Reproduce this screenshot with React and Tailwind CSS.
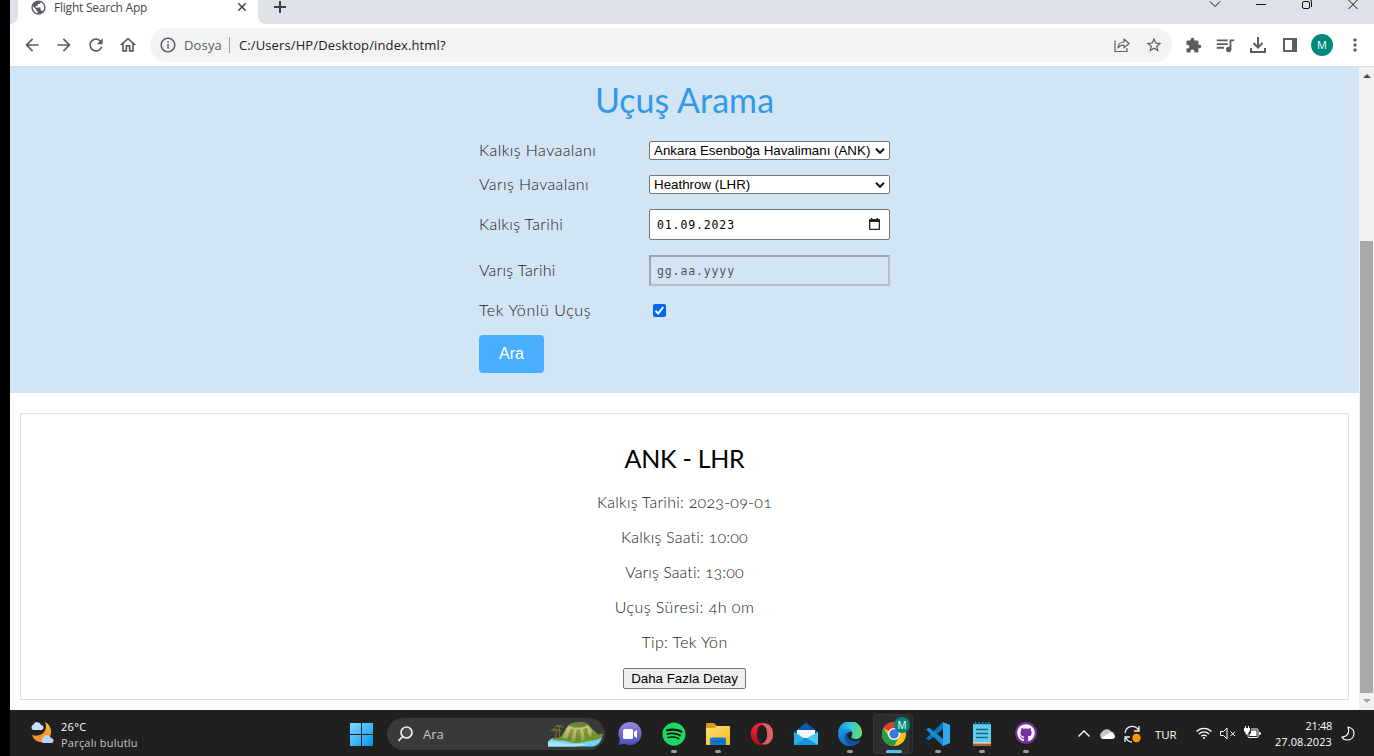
import React from "react";
import {
  MdArrowBack, MdArrowForward, MdRefresh, MdOutlineHome, MdInfoOutline, MdStarBorder,
  MdExtension, MdQueueMusic, MdMoreVert, MdPublic,
} from "react-icons/md";
import { FaGithub, FaSpotify } from "react-icons/fa";

function TabStrip() {
  return (
    <div className="flex h-6 shrink-0 bg-white">
      <div className="w-2 rounded-br-lg bg-[#dee1e8]" />
      <div className="flex h-4 w-60 items-center pl-3">
        <MdPublic className="-mt-[2px] size-[17px] shrink-0 text-[#5a5e63]" />
        <span className="ml-[7px] -mt-px flex-1 text-[12px] leading-4 tracking-[-0.22px] text-[#45484c]">Flight Search App</span>
        <svg className="-mt-[2px] mr-3 size-2" viewBox="0 0 8 8" stroke="#3c4043" strokeWidth="1.5"><path d="M.3.3l7.4 7.4M7.7.3L.3 7.7" /></svg>
      </div>
      <div className="flex flex-1 items-start rounded-bl-lg bg-[#dee1e8]">
        <svg className="ml-4 mt-[1px] size-3" viewBox="0 0 12 12" stroke="#3c4043" strokeWidth="2"><path d="M6 0v12M0 6h12" /></svg>
        <div className="flex-1" />
        <svg className="h-6 w-[174px]" viewBox="0 0 174 24" fill="none" stroke="#111" strokeWidth="1">
          <path d="M10 1.5l5 5 5-5M56 4.500h10" />
          <rect x="102.500" y="1.500" width="7" height="7" rx="1.500" />
          <path d="M104.500-.5h5a2 2 0 0 1 2 2V7M148.500 0l9 9M157.500 0l-9 9" />
        </svg>
      </div>
    </div>
  );
}

function Toolbar() {
  return (
    <div className="flex h-[43px] shrink-0 items-center border-b border-[#dadce0] bg-white pl-3 text-[#5a5e63]">
      <div className="flex w-32 gap-3">
        <MdArrowBack className="size-5" />
        <MdArrowForward className="size-5" />
        <MdRefresh className="size-5" />
        <MdOutlineHome className="size-5" />
      </div>
      <div className="flex h-[34px] w-[1022px] items-center rounded-full bg-[#f1f3f4] pl-[9px] pr-[9px]">
        <MdInfoOutline className="size-[18px]" />
        <span className="ml-[7px] pt-px text-[13px] tracking-[0.15px]">Dosya</span>
        <span className="ml-[7px] h-4 w-px bg-[#9aa0a6]" />
        <span className="ml-[9px] flex-1 pt-px text-[13px] tracking-[0.12px] text-[#202124]">C:/Users/HP/Desktop/index.html?</span>
        <svg className="mr-[15px] h-4 w-4" viewBox="0 0 16 16" fill="none" stroke="#5f6368" strokeWidth="1.2">
          <path d="M1 3.500v11h12V11" /><path d="M4 11c.3-4 2.500-6 6-6V2l5 4.500-5 4.300V8C7.300 8 5.400 9 4 11z" strokeLinejoin="round" />
        </svg>
        <MdStarBorder className="size-[18px]" />
      </div>
      <div className="ml-[13px] flex items-center">
        <MdExtension className="size-[17px]" />
        <MdQueueMusic className="ml-3 size-[22px]" />
        <svg className="ml-[13px] size-[18px]" viewBox="0 0 18 18" fill="none" stroke="currentColor" strokeWidth="2"><path d="M9 1v10M4.500 7L9 11.500 13.500 7M2 12v4h14v-4" /></svg>
        <svg className="ml-4 h-[14px] w-[14px]" viewBox="0 0 14 14"><path fill="currentColor" fillRule="evenodd" d="M0 0h14v14H0zM2 2v10h7V2z" /></svg>
        <span className="ml-[14px] flex size-[22px] items-center justify-center rounded-full bg-[#00897b] text-[11px] text-white">M</span>
        <MdMoreVert className="ml-3 size-5" />
      </div>
    </div>
  );
}

function Select({ children }) {
  return (
    <div className="flex h-[19px] items-center rounded-[2px] border border-[#767676] bg-white pl-1 pr-1 font-['Liberation_Sans',sans-serif] text-[13.333px] leading-[17px] text-black">
      <span className="flex-1 whitespace-nowrap">{children}</span>
      <svg className="h-[6px] w-[10px]" viewBox="0 0 10 6" fill="none" stroke="#111" strokeWidth="2"><path d="M1 .8l4 4 4-4" /></svg>
    </div>
  );
}

function SearchForm() {
  return (
    <section className="flex h-[326px] flex-col items-center bg-[#d2e5f5] font-['Lato',sans-serif]">
      <h1 className="mt-[13px] h-[61px] whitespace-nowrap text-[34px] leading-10 tracking-[0.05px] text-[#3498ea]">Uçuş Arama</h1>
      <div className="grid w-[411px] grid-cols-[170px_241px] grid-rows-[19px_19px_31px_31px_19px_38px] items-center gap-y-[15px] text-[16px] font-light text-[#222]">
        <span className="pb-[2px] tracking-[0.45px]">Kalkış Havaalanı</span>
        <Select>Ankara Esenboğa Havalimanı (ANK)</Select>
        <span className="pb-[2px] tracking-[0.41px]">Varış Havaalanı</span>
        <Select>Heathrow (LHR)</Select>
        <span className="pb-[2px] tracking-[0.33px]">Kalkış Tarihi</span>
        <div className="flex h-[31px] items-center justify-between rounded-[2px] border border-[#767676] bg-white pl-[7px] pr-[9px] font-['DejaVu_Sans_Mono',monospace] text-[11.5px] font-normal tracking-[0.87px] text-black">
          <span className="pt-[2px]">01.09.2023</span>
          <svg className="-mt-[2px] h-3 w-[11px]" viewBox="0 0 11 12"><path fill="#222" fillRule="evenodd" d="M1 1h1V0h1.300v1h4.400V0H9v1h1q1 0 1 1v9q0 1-1 1H1q-1 0-1-1V2q0-1 1-1zM1.300 4v6.700h8.400V4z" /></svg>
        </div>
        <span className="pb-[2px] tracking-[0.25px]">Varış Tarihi</span>
        <div className="flex h-[31px] items-center border-2 border-b-[#b3c1ce] border-l-[#9ba8b4] border-r-[#b3c1ce] border-t-[#9ba8b4] pl-[6px] pt-[2px] font-['DejaVu_Sans_Mono',monospace] text-[11.5px] font-normal tracking-[0.87px] text-[#545454]">gg.aa.yyyy</div>
        <span className="pb-[2px] tracking-[0.6px]">Tek Yönlü Uçuş</span>
        <span className="ml-1 flex size-[13px] items-center justify-center rounded-[2px] bg-[#0067f5]">
          <svg className="size-[11px]" viewBox="0 0 11 11" fill="none" stroke="#fff" strokeWidth="2"><path d="M1.500 5.800l2.700 2.700 5-6.500" /></svg>
        </span>
        <button className="h-[38px] w-[65px] rounded bg-[#49aeff] font-['Liberation_Sans',sans-serif] text-[16px] font-normal text-white">Ara</button>
      </div>
    </section>
  );
}

function FlightCard() {
  return (
    <section className="mx-[10px] mt-5 flex h-[287px] flex-col items-center border border-[#d2e3f3] font-['Lato',sans-serif] text-[16px] font-light leading-[19px] text-[#222] oldstyle-nums">
      <h2 className="mb-[19px] mt-[29px] text-[25px] font-normal leading-[30px] tracking-[-0.25px] text-black">ANK - LHR</h2>
      <div className="flex flex-col items-center gap-4">
        <p className="tracking-[0.24px]">Kalkış Tarihi: 2023-09-01</p>
        <p className="tracking-[0.2px]">Kalkış Saati: 10:00</p>
        <p className="tracking-[0.08px]">Varış Saati: 13:00</p>
        <p className="tracking-[0.46px]">Uçuş Süresi: 4h 0m</p>
        <p className="tracking-[0.35px]">Tip: Tek Yön</p>
      </div>
      <button className="mt-[17px] h-[21px] w-[123px] whitespace-nowrap rounded-[2px] border border-[#767676] bg-[#efefef] font-['Liberation_Sans',sans-serif] text-[13.333px] font-normal leading-[19px] text-black">Daha Fazla Detay</button>
    </section>
  );
}

function Scrollbar() {
  return (
    <div className="flex w-[15px] shrink-0 flex-col items-center bg-[#f1f1f1]">
      <svg className="h-[174px] w-[15px] shrink-0" viewBox="0 0 15 174"><path d="M4 11l4-4 4 4z" fill="#505050" /></svg>
      <div className="h-[452px] w-[13px] shrink-0 bg-[#a8a8a8]" />
      <svg className="h-4 w-[15px]" viewBox="0 0 15 16"><path d="M4 6h8l-4 4z" fill="#a3a3a3" /></svg>
    </div>
  );
}

function WeatherIcon() {
  return (
    <svg className="h-6 w-6" viewBox="0 0 24 24">
      <defs><linearGradient id="moon" x2="0" y2="1"><stop stopColor="#f6bd32" /><stop offset="1" stopColor="#f28a22" /></linearGradient></defs>
      <path d="M15 1c3.500 8-3 16-13 13 2 6 8 9 14 6C23 16 23 5 15 1z" fill="url(#moon)" />
      <path d="M3 9a3 3 0 0 1 .5-5.500A4 4 0 0 1 11 4a2.600 2.600 0 0 1 1 5z" fill="#cfdef8" />
      <path d="M13 22a3 3 0 0 1 .5-5.500A4 4 0 0 1 21 17a2.600 2.600 0 0 1 1 5z" fill="#bdd2f6" />
    </svg>
  );
}

function IslandArt() {
  return (
    <svg className="h-[26px] w-[57px]" viewBox="0 0 57 26">
      <defs>
        <linearGradient id="hill" x2="0" y2="1"><stop stopColor="#9aa957" /><stop offset="1" stopColor="#5f8a24" /></linearGradient>
        <linearGradient id="ridge" x2="0" y2="1"><stop stopColor="#dcc98d" /><stop offset="1" stopColor="#8f9c3e" /></linearGradient>
      </defs>
      <path d="M1 25.500v-5c2-3 5-3.500 9-3.500h30l15-3c0 6-4 11-9 11.500z" fill="#74d3f5" />
      <path d="M1 21c8-1 14 2 22 2h18c-4 1-9 2.500-14 2.500H1z" fill="#a6e5f8" />
      <path d="M4 17c13-1 34-1 52-4.500 0 4-4 6-10 7-6 0-9 2.500-16 2.500-8 0-10-3-15-2.500-5 0-9 0-11-2.500z" fill="#6f9428" />
      <path d="M12 18c4-4 6-10 9-13 2-2 5-3.500 9-3.500 5-.5 9 0 11 2 4 4 6 7 10 9.500-8 6-31 9-39 5z" fill="url(#hill)" />
      <path d="M21 5l-6 12 5 1 4-11zM27 7l-3 13 4 1 2-14zM33 7l1 13 4-1-2-12zM40 4l1 9 3 3 1-6z" fill="url(#ridge)" />
      <path d="M22 4.500c3-3 6-3 9-3 5-.5 8 0 10 2-5 3.500-13 4-19 1z" fill="#62863a" />
      <path d="M22 5c5 2.500 13 2.500 19-.5l1 1.500c-5 3-15 3-21 1z" fill="#cdbb7e" />
      <path d="M8.500 18l1-10M12.500 17V6" stroke="#83663c" strokeWidth="1.200" />
      <path d="M4 10c1-2.500 4-3 6-1.500 2-1 3 0 4 2-2-1-3-1-4-.5-2-.5-4-.5-6 0zM8 6c1-2.500 3-2.500 4.500-1.500C14.500 3.500 16 5 16 7c-1-1.500-2-1.500-3.500-1-1.500-.5-3-.5-4.500 0z" fill="#5c7a35" stroke="#5a6a2f" strokeWidth=".7" />
    </svg>
  );
}

function AppSlot({ children, dot }) {
  return (
    <div className="flex h-[46px] w-11 shrink-0 flex-col items-center pt-3">
      {children}
      {dot && <span className="mt-1 h-[3px] w-[6px] shrink-0 rounded-full bg-[#9b9b9b]" />}
    </div>
  );
}

function Apps() {
  return (
    <div className="flex">
      <AppSlot>
        <svg className="size-6" viewBox="0 0 24 24">
          <defs><linearGradient id="chat" x2="0" y2="1"><stop stopColor="#9a86df" /><stop offset="1" stopColor="#4b50bd" /></linearGradient></defs>
          <path d="M12 0a11.500 11.500 0 1 1-5 21.800L.8 23l1-6A11.500 11.500 0 0 1 12 0z" fill="url(#chat)" />
          <rect x="5" y="7" width="10" height="10" rx="1.500" fill="#fff" /><path d="M16 10l3-2v8l-3-2z" fill="#fff" />
        </svg>
      </AppSlot>
      <AppSlot dot>
        <span className="flex size-6 items-center justify-center rounded-full bg-[#101010]"><FaSpotify className="size-6 text-[#1ed760]" /></span>
      </AppSlot>
      <AppSlot dot>
        <svg className="size-6" viewBox="0 0 24 24">
          <defs><linearGradient id="folder" x2="1" y2="1"><stop stopColor="#ffe172" /><stop offset="1" stopColor="#f5b922" /></linearGradient></defs>
          <path d="M0 2q0-1 1-1h7l3 3v4H0z" fill="#d99b10" /><path d="M0 6h8l3-2h12q1 0 1 1v18H1q-1 0-1-1z" fill="url(#folder)" />
          <path d="M4 23v-6q0-1.500 1.500-1.500h13Q20 15.500 20 17v6z" fill="#1479cc" /><path d="M7 19.500h10" stroke="#0a579c" />
        </svg>
      </AppSlot>
      <AppSlot>
        <svg className="size-6" viewBox="0 0 24 24">
          <defs><linearGradient id="opera" x2="0" y2="1"><stop stopColor="#ff2138" /><stop offset="1" stopColor="#b50a1d" /></linearGradient></defs>
          <circle cx="12" cy="12" r="11.200" fill="url(#opera)" /><path d="M12 2.500c4-3 11 1 11 9.500s-7 12.500-11 9.500z" fill="#de6068" /><ellipse cx="12" cy="12" rx="5.200" ry="9.200" fill="#202020" />
        </svg>
      </AppSlot>
      <AppSlot>
        <svg className="size-6" viewBox="0 0 24 24">
          <path d="M0 10L12 .5 24 10v3H0z" fill="#075bae" /><path d="M3 8h18v8H3z" fill="#f3f5f8" />
          <path d="M0 10l12 7.500L24 10v13H0z" fill="#28aee9" /><path d="M24 10v13L12 16.500z" fill="#51c9f5" /><path d="M0 23l12-7 12 7z" fill="#1794df" />
        </svg>
      </AppSlot>
      <AppSlot dot>
        <svg className="size-6" viewBox="0 0 24 24">
          <defs>
            <linearGradient id="edgeTop"><stop stopColor="#168fe2" /><stop offset=".5" stopColor="#35c5dc" /><stop offset="1" stopColor="#6adf65" /></linearGradient>
            <linearGradient id="edgeLow" x2="0" y2="1"><stop stopColor="#1b9de2" /><stop offset="1" stopColor="#1167c9" /></linearGradient>
          </defs>
          <path d="M0 11A12 12 0 0 1 24 11c0 4-3 6-6.500 6-3 0-4-1-4-2.300C14 13 15 12 14 10c-2-4-10-4-14 1z" fill="url(#edgeTop)" />
          <path d="M0 12c2-6 11-7 14-2-4-1-6 2-5 5 1 4 7 6 12 3.500.8-.4 1 0 .5.7C19 22 16 24 12 24A12 12 0 0 1 0 12z" fill="url(#edgeLow)" />
          <path d="M9.200 10.500C4 14 7 22 14 23.800c4-.2 7-2.600 8.500-5.300-7 3-14-1-13.300-8z" fill="#124f9d" />
        </svg>
      </AppSlot>
      <div className="flex h-[46px] w-11 pl-px pt-1">
        <div className="h-10 w-10 rounded border border-[#353535] bg-[#272727]">
          <div className="relative -ml-px -mt-px flex h-10 w-[36px] flex-col items-center rounded border border-[#383838] bg-[#2e2e2e] pl-[5px] pt-[7px]">
            <svg className="size-6 shrink-0" viewBox="0 0 24 24">
              <circle cx="12" cy="12" r="12" fill="#fbc116" /><path d="M12 12L1.600 6A12 12 0 0 1 22.400 6H12z" fill="#e33b2e" /><path d="M1.600 6A12 12 0 0 0 12 24l5.200-9L12 12 6.800 15z" fill="#239b4b" />
              <circle cx="12" cy="12" r="6" fill="#fff" /><circle cx="12" cy="12" r="4.700" fill="#3478e5" />
            </svg>
            <span className="mt-1 h-[3px] w-4 shrink-0 rounded-full bg-[#4cc2ff]" />
            <span className="absolute left-[20px] top-[2px] flex size-[16px] items-center justify-center rounded-full bg-[#00897b] text-[10px] leading-none text-white">M</span>
          </div>
        </div>
      </div>
      <AppSlot dot>
        <svg className="size-6" viewBox="0 0 24 24">
          <path d="M17 0v7L3 18.500 0 16.500z" fill="#0877bc" /><path d="M0 7.500l3-2L17 17v7z" fill="#168bd0" /><path d="M17 0l7 3v18l-7 3z" fill="#32a9ee" />
        </svg>
      </AppSlot>
      <AppSlot dot>
        <svg className="size-6" viewBox="0 0 24 24">
          <rect x="3" y="2" width="18" height="20" fill="#61cce9" /><path d="M3 21h18v3H3z" fill="#b45d20" /><path d="M3 20.500h18v1H3z" fill="#eee" />
          <path d="M6 7.500h12M6 11.500h12M6 15.500h12" stroke="#14678b" strokeWidth="1.600" /><path d="M5.500 0v3M9 0v3M12.500 0v3M16 0v3M19 0v3" stroke="#248ab3" strokeWidth="1.400" />
        </svg>
      </AppSlot>
      <AppSlot dot>
        <span className="flex size-[22px] items-center justify-center rounded-full bg-[#7a2ea0]"><FaGithub className="size-[18px] text-white" /></span>
        <span className="h-[2px] shrink-0" />
      </AppSlot>
    </div>
  );
}

function Taskbar() {
  return (
    <div className="flex h-[46px] shrink-0 bg-[#202020] text-white">
      <div className="flex w-[339px] gap-[7px] pl-5 pt-[11px]">
        <WeatherIcon />
        <div className="-mt-[2px] text-[11px] leading-4">
          <div className="tracking-[0.3px]">26°C</div>
          <div className="tracking-[0.22px] text-[#c5c5c5]">Parçalı bulutlu</div>
        </div>
      </div>
      <svg className="mt-[13px] h-[23px] w-[25px]" viewBox="0 0 25 23">
        <defs><linearGradient id="win" x2="1" y2="1"><stop stopColor="#7bdcff" /><stop offset="1" stopColor="#0693ee" /></linearGradient></defs>
        <path d="M1 0h11v11H1zM13 0h11v11H13zM1 12h11v11H1zM13 12h11v11H13z" fill="url(#win)" />
      </svg>
      <div className="ml-[13px] mt-2 flex h-8 w-[218px] items-center rounded-full bg-[#393939] pl-[10px] pr-px">
        <svg className="h-4 w-4 shrink-0" viewBox="0 0 16 16" fill="none" stroke="#eee" strokeWidth="1.700"><circle cx="9.500" cy="6.500" r="5.500" fill="#4a4a4a" /><path d="M5.500 10.500L1.500 15" /></svg>
        <span className="ml-[10px] flex-1 pt-px text-[13px] text-[#c7c7c7]">Ara</span>
        <IslandArt />
      </div>
      <div className="ml-[3px]"><Apps /></div>
      <div className="flex flex-1 items-center pl-[30px]">
        <svg className="h-[7px] w-3 shrink-0" viewBox="0 0 12 7" fill="none" stroke="#fff" strokeWidth="1.300"><path d="M.5 6.500L6 1l5.500 5.500" /></svg>
        <svg className="ml-[9px] h-[11px] w-[17px] shrink-0" viewBox="0 0 17 11"><path d="M4 11a4 4 0 0 1-.5-7.500A5 5 0 0 1 12 3.500 4 4 0 0 1 13.500 11z" fill="#c6c6c6" /><path d="M2 10l10-6 4 4q0 3-3 3H4z" fill="#fff" /></svg>
        <svg className="ml-2 mt-[2px] h-[18px] w-[17px] shrink-0" viewBox="0 0 17 18" fill="none" stroke="#eee" strokeWidth="1.300"><path d="M1 8C2 1 10-1 15 5M15 1v5h-5M1 17v-5h5M2 13c1 2 3 4 6 4" /><circle cx="12.500" cy="13" r="4.200" fill="#ff9800" stroke="none" /></svg>
        <span className="ml-[14px] w-6 pt-[3px] text-[11.500px] tracking-[-0.1px]">TUR</span>
        <svg className="ml-[17px] h-3 w-4 shrink-0" viewBox="0 0 16 12" fill="none" stroke="#fff" strokeWidth="1.300"><path d="M.5 4.500a10.500 10.500 0 0 1 15 0M3 7a7 7 0 0 1 10 0M5.300 9.300a4 4 0 0 1 5.400 0" /><circle cx="8" cy="11" r="1" fill="#fff" stroke="none" /></svg>
        <svg className="ml-2 h-[13px] w-4 shrink-0" viewBox="0 0 16 13" fill="none" stroke="#fff" strokeWidth="1"><path d="M.5 4.500h3L7 1v11L3.500 8.500h-3zM10.500 4.500l4.500 4.500M15 4.500L10.500 9" /></svg>
        <svg className="ml-2 h-[14px] w-[17px] shrink-0" viewBox="0 0 17 14">
          <path d="M7 3h6q1 0 1 1v6.500q0 1-1 1H5q-1 0-1-1V9" fill="none" stroke="#fff" strokeWidth="1" />
          <path d="M7 4.500h5.500V10h-7V8.500L7 7zM15 6h1l1 1v1l-1 1h-1zM1 0h1v2h2V0h1v2h1v3L4.500 6.500v2h-3v-2L0 5V2h1z" fill="#fff" />
        </svg>
        <div className="ml-[11px] w-[60px] whitespace-nowrap pt-[2px] text-right text-[11px] leading-4"><div className="tracking-[-0.3px]">21:48</div><div className="tracking-[0.1px]">27.08.2023</div></div>
        <svg className="ml-[9px] h-[15px] w-[14px] shrink-0" viewBox="0 0 14 15" fill="none" stroke="#fff" strokeWidth="1.200"><path d="M7 1c9 2 7 13-1 13-2 0-4-1-5-3 5 0 8-4 6-10z" strokeLinejoin="round" /></svg>
      </div>
    </div>
  );
}

export default function App() {
  return (
    <div className="h-[756px] w-[1374px] overflow-hidden bg-black pl-[10px] font-['Open_Sans','Noto_Sans',sans-serif]">
      <div className="flex h-full flex-col">
        <TabStrip />
        <Toolbar />
        <div className="flex h-[643px] shrink-0 bg-white">
          <main className="flex-1"><SearchForm /><FlightCard /></main>
          <Scrollbar />
        </div>
        <Taskbar />
      </div>
    </div>
  );
}
